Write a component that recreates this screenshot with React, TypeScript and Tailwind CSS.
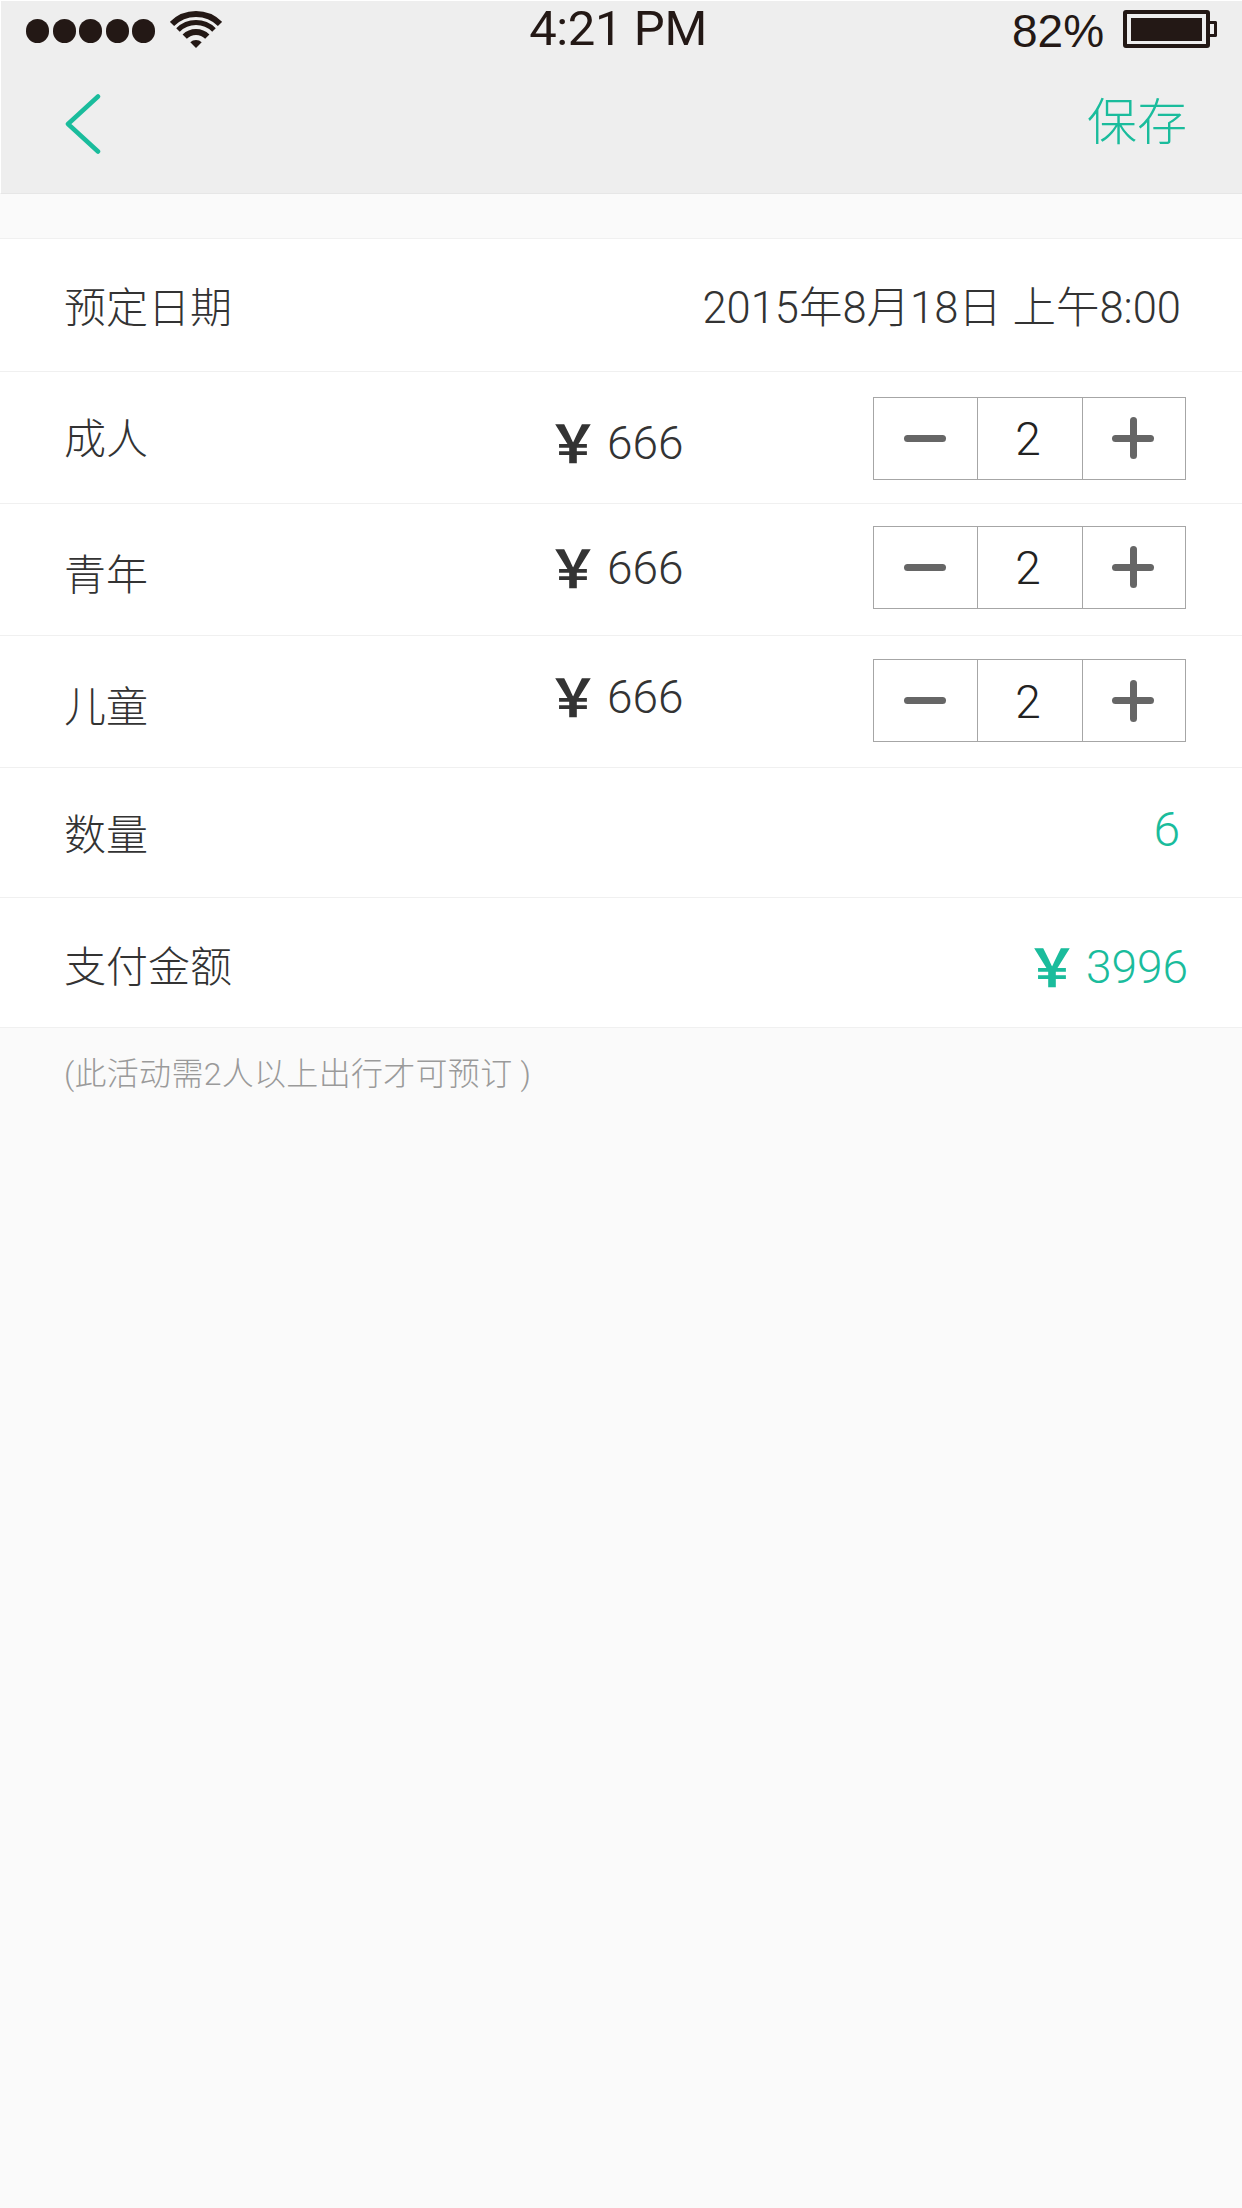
const cjk = "font-['Roboto','Noto_Sans_CJK_SC',sans-serif] font-light";

interface FareRow {
  label: string;
  labelClass: string;
  priceClass: string;
  stepperClass: string;
}

const fares: FareRow[] = [
  { label: "成人", labelClass: "mt-[4px]", priceClass: "mt-[10px]", stepperClass: "mt-[1px]" },
  { label: "青年", labelClass: "mt-[12px]", priceClass: "-mt-[4px]", stepperClass: "-mt-[5px]" },
  { label: "儿童", labelClass: "mt-[11px]", priceClass: "-mt-[10px]", stepperClass: "-mt-[2px]" },
];

const Yen = () => (
  <span className="-ml-[10px] -mt-[3px] w-[60px] font-['Noto_Sans_CJK_SC',sans-serif] text-[52px] font-bold leading-none">￥</span>
);

const StatusBar = () => (
  <div className="flex h-[57px] items-start justify-between pl-[25px] pr-[25px] text-[#231815] font-['Liberation_Sans',sans-serif]">
    <div className="mt-[10px] flex w-[197px] items-start">
      <div className="mt-[8px] flex gap-[3.5px]">
        <span className="h-[24px] w-[23px] rounded-full bg-[#231815]" />
        <span className="h-[24px] w-[23px] rounded-full bg-[#231815]" />
        <span className="h-[24px] w-[23px] rounded-full bg-[#231815]" />
        <span className="h-[24px] w-[23px] rounded-full bg-[#231815]" />
        <span className="h-[24px] w-[23px] rounded-full bg-[#231815]" />
      </div>
      <svg className="ml-[15px]" width="52" height="37" viewBox="0 0 52 37" fill="none" stroke="#231815">
        <path d="M2 13 A34 34 0 0 1 50 13" strokeWidth="6" />
        <path d="M8 19 A25.5 25.5 0 0 1 44 19" strokeWidth="5" />
        <path d="M14.7 25.7 A16 16 0 0 1 37.3 25.7" strokeWidth="6" />
        <path d="M26 37 L20.3 31.3 A8 8 0 0 1 31.7 31.3 Z" fill="#231815" stroke="none" />
      </svg>
    </div>
    <span className="mt-[1px] font-['Roboto',sans-serif] text-[49px] font-normal leading-[54px] tracking-[-0.4px]">4:21 PM</span>
    <div className="mt-[9px] flex w-[204px] items-start">
      <span className="-ml-[1px] -mt-[5px] text-[46px] leading-[52px]">82%</span>
      <div className="ml-[19px] flex items-center">
        <div className="flex h-[38px] w-[87px] items-center rounded-[3px] border-[4px] border-[#231815] px-[4px]">
          <div className="h-[23px] w-full bg-[#231815]" />
        </div>
        <div className="h-[16px] w-[7px] rounded-r-[2px] border-[3px] border-l-0 border-[#231815]" />
      </div>
    </div>
  </div>
);

const Stepper = ({ className }: { className: string }) => (
  <div className={`flex h-[83px] w-[313px] border border-[#a6a6a6] ${className}`}>
    <div className="flex w-[104px] items-center justify-center border-r border-[#a6a6a6] pr-[2px]">
      <span className="h-[7px] w-[42px] rounded-full bg-[#666666]" />
    </div>
    <div className="flex w-[105px] items-center justify-center border-r border-[#a6a6a6] pr-[4px] pt-[3px] text-[46px] text-[#222222]">
      2
    </div>
    <div className="relative flex flex-1 items-center justify-center pr-[2px]">
      <span className="h-[7px] w-[42px] rounded-full bg-[#666666]" />
      <span className="absolute h-[42px] w-[7px] rounded-full bg-[#666666]" />
    </div>
  </div>
);

export default function App() {
  return (
    <div className={`min-h-[2208px] w-[1242px] bg-[#fafafa] ${cjk}`}>
      <header className="h-[194px] border-b border-l border-t border-b-[#e6e6e6] border-l-white border-t-white bg-[#eeeeee]">
        <StatusBar />
        <div className="flex h-[135px] items-center justify-between pl-[64px] pr-[55px]">
          <svg className="-mt-[3px]" width="36" height="60" viewBox="0 0 36 60" fill="none" stroke="#1abc9c" strokeWidth="4.5" strokeLinecap="round" strokeLinejoin="round">
            <path d="M33 2.5 L3 30 L33 57.5" />
          </svg>
          <span className="-mt-[5px] text-[50px] leading-[60px] text-[#1abc9c]">保存</span>
        </div>
      </header>

      <main className="mt-[44px] border-t border-[#f0f0f0] bg-white text-[#333333]">
        <div className="flex h-[133px] items-center justify-between border-b border-[#f0f0f0] pl-[64px] pr-[61px] pt-[7px]">
          <span className="text-[42px]">预定日期</span>
          <span className="text-[43.5px]">2015年8月18日 上午8:00</span>
        </div>

        {fares.map((fare) => (
          <div key={fare.label} className="flex h-[132px] items-center border-b border-[#f0f0f0] pl-[64px]">
            <span className={`w-[493px] text-[42px] ${fare.labelClass}`}>{fare.label}</span>
            <span className={`flex w-[316px] items-center ${fare.priceClass}`}>
              <Yen />
              <span className="text-[46px] leading-none">666</span>
            </span>
            <Stepper className={fare.stepperClass} />
          </div>
        ))}

        <div className="flex h-[130px] items-center justify-between border-b border-[#f0f0f0] pl-[64px] pr-[62px]">
          <span className="mt-[6px] text-[42px]">数量</span>
          <span className="-mt-[6px] text-[48px] text-[#1abc9c]">6</span>
        </div>

        <div className="flex h-[130px] items-center justify-between border-b border-[#f0f0f0] pl-[64px] pr-[54px]">
          <span className="mt-[10px] text-[42px]">支付金额</span>
          <span className="mt-[8px] flex items-center text-[#1abc9c]">
            <Yen />
            <span className="text-[46px] leading-none">3996</span>
          </span>
        </div>
      </main>

      <p className="pl-[64px] pt-[24px] text-[32px] leading-[44px] tracking-[0.3px] text-[#9a9a9a]">(此活动需2人以上出行才可预订 )</p>
    </div>
  );
}
